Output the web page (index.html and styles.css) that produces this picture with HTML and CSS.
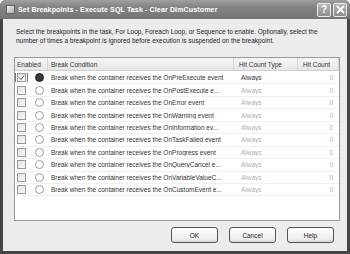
FILE: index.html
```html
<!DOCTYPE html>
<html>
<head>
<meta charset="utf-8">
<link rel="stylesheet" href="styles.css">
</head>
<body>
<div class="window">
  <div class="titlebar">
    <div class="ticon"></div>
    <div class="ttext">Set Breakpoints - Execute SQL Task - Clear DimCustomer</div>
    <div class="tbtn">?</div>
    <div class="tbtn close">
      <svg width="9" height="9" viewBox="0 0 9 9"><path d="M1 1L8 8M8 1L1 8" stroke="#fff" stroke-width="1.8"/></svg>
    </div>
  </div>
  <div class="body">
    <p class="desc">Select the breakpoints in the task, For Loop, Foreach Loop, or Sequence to enable. Optionally, select the number of times a breakpoint is ignored before execution is suspended on the breakpoint.</p>
    <div class="list">
      <div class="row head">
        <div class="c c1">Enabled</div>
        <div class="c c2">Break Condition</div>
        <div class="c c3">Hit Count Type</div>
        <div class="c c4">Hit Count</div>
      </div>
      <div class="row on">
        <div class="c c1"><span class="cb focus"><svg width="7" height="7" viewBox="0 0 7 7"><path d="M1 3.5L3 5.5L6 1.5" fill="none" stroke="#555" stroke-width="1"/></svg></span><span class="dot full"></span></div>
        <div class="c c2">Break when the container receives the OnPreExecute event</div>
        <div class="c c3">Always</div>
        <div class="c c4">0</div>
      </div>
      <div class="row">
        <div class="c c1"><span class="cb"></span><span class="dot"></span></div>
        <div class="c c2">Break when the container receives the OnPostExecute e...</div>
        <div class="c c3">Always</div>
        <div class="c c4">0</div>
      </div>
      <div class="row">
        <div class="c c1"><span class="cb"></span><span class="dot"></span></div>
        <div class="c c2">Break when the container receives the OnError event</div>
        <div class="c c3">Always</div>
        <div class="c c4">0</div>
      </div>
      <div class="row">
        <div class="c c1"><span class="cb"></span><span class="dot"></span></div>
        <div class="c c2">Break when the container receives the OnWarning event</div>
        <div class="c c3">Always</div>
        <div class="c c4">0</div>
      </div>
      <div class="row">
        <div class="c c1"><span class="cb"></span><span class="dot"></span></div>
        <div class="c c2">Break when the container receives the OnInformation ev...</div>
        <div class="c c3">Always</div>
        <div class="c c4">0</div>
      </div>
      <div class="row">
        <div class="c c1"><span class="cb"></span><span class="dot"></span></div>
        <div class="c c2">Break when the container receives the OnTaskFailed event</div>
        <div class="c c3">Always</div>
        <div class="c c4">0</div>
      </div>
      <div class="row">
        <div class="c c1"><span class="cb"></span><span class="dot"></span></div>
        <div class="c c2">Break when the container receives the OnProgress event</div>
        <div class="c c3">Always</div>
        <div class="c c4">0</div>
      </div>
      <div class="row">
        <div class="c c1"><span class="cb"></span><span class="dot"></span></div>
        <div class="c c2">Break when the container receives the OnQueryCancel e...</div>
        <div class="c c3">Always</div>
        <div class="c c4">0</div>
      </div>
      <div class="row">
        <div class="c c1"><span class="cb"></span><span class="dot"></span></div>
        <div class="c c2">Break when the container receives the OnVariableValueC...</div>
        <div class="c c3">Always</div>
        <div class="c c4">0</div>
      </div>
      <div class="row">
        <div class="c c1"><span class="cb"></span><span class="dot"></span></div>
        <div class="c c2">Break when the container receives the OnCustomEvent e...</div>
        <div class="c c3">Always</div>
        <div class="c c4">0</div>
      </div>
    </div>
    <div class="buttons">
      <div class="btn">OK</div>
      <div class="btn">Cancel</div>
      <div class="btn">Help</div>
    </div>
  </div>
</div>
</body>
</html>
```
FILE: styles.css
```css
* { box-sizing: border-box; }
html, body { margin: 0; padding: 0; background: #fff; }
body { font-family: "Liberation Sans", Arial, sans-serif; }
.window {
  width: 350px; height: 254px;
  background: #454545;
  border-radius: 6px 6px 0 0;
  display: flex; flex-direction: column;
  overflow: hidden;
}
.titlebar {
  height: 19px;
  background: linear-gradient(#a0a0a0, #858585 35%, #747474);
  display: flex; align-items: center;
  padding: 0 3px 0 6px;
}
.ticon {
  width: 9px; height: 9px;
  background: linear-gradient(135deg, #eee, #aaa);
  border: 1px solid #666;
  margin-right: 3px;
}
.ttext {
  flex: 1;
  color: #fff; font-weight: bold; font-size: 7.1px;
  letter-spacing: 0.1px;
}
.tbtn {
  width: 14px; height: 14px;
  margin-left: 2px;
  border: 1px solid #eee;
  border-radius: 2px;
  background: linear-gradient(#b5b5b5, #8e8e8e);
  color: #fff; font-weight: bold; font-size: 10px;
  display: flex; align-items: center; justify-content: center;
}
.body {
  flex: 1;
  margin: 0 3px 3px 3px;
  background: #ececec;
  padding: 8px 7px 0 11px;
  display: flex; flex-direction: column;
}
.desc {
  margin: 0 0 10px 2px;
  font-size: 6.5px; line-height: 9px; color: #222;
  height: 20px;
}
.list {
  width: 326px; height: 164px;
  background: #fff;
  border: 1px solid #9a9a9a;
  font-size: 6.5px;
}
.row {
  display: grid;
  grid-template-columns: 33px 186px 64px 1fr;
  height: 12.44px;
  align-items: center;
  border-bottom: 1px solid #f0f0f0;
  color: #333;
}
.row.head {
  height: 13px;
  background: linear-gradient(#f6f6f6, #e6e6e6);
  border-bottom: 1px solid #cfcfcf;
  margin-bottom: 1px;
  color: #333;
}
.head .c { border-right: 1px solid #d8d8d8; height: 100%; display: flex; align-items: center; }
.c { padding-left: 3px; white-space: nowrap; overflow: hidden; }
.c1 { display: flex; align-items: center; padding-left: 2px; }
.c3 { color: #b0b0b0; padding-left: 7px; }
.c4 { color: #b0b0b0; text-align: right; padding-right: 6px; }
.head .c3, .head .c4 { color: #333; justify-content: flex-start; padding-left: 5px; }
.on .c3 { color: #333; }
.cb {
  width: 9px; height: 9px;
  border: 1px solid #999;
  background: linear-gradient(135deg, #e0e0e0, #fafafa);
  display: flex; align-items: center; justify-content: center;
}
.cb.focus { outline: 1px solid #777; outline-offset: 1px; }
.dot {
  width: 9px; height: 9px; border-radius: 50%;
  border: 1px solid #999;
  margin-left: 9px;
  background: #fff;
}
.dot.full { background: #3a3a3a; border-color: #222; }
.buttons {
  display: flex; justify-content: flex-end;
  gap: 11px;
  margin-top: 6px;
  padding-right: 6px;
}
.btn {
  width: 47px; height: 16px;
  border: 1px solid #555;
  border-radius: 3px;
  background: linear-gradient(#fff, #ececec 80%, #d8d8d8);
  font-size: 6.5px; color: #222;
  display: flex; align-items: center; justify-content: center;
}
```
